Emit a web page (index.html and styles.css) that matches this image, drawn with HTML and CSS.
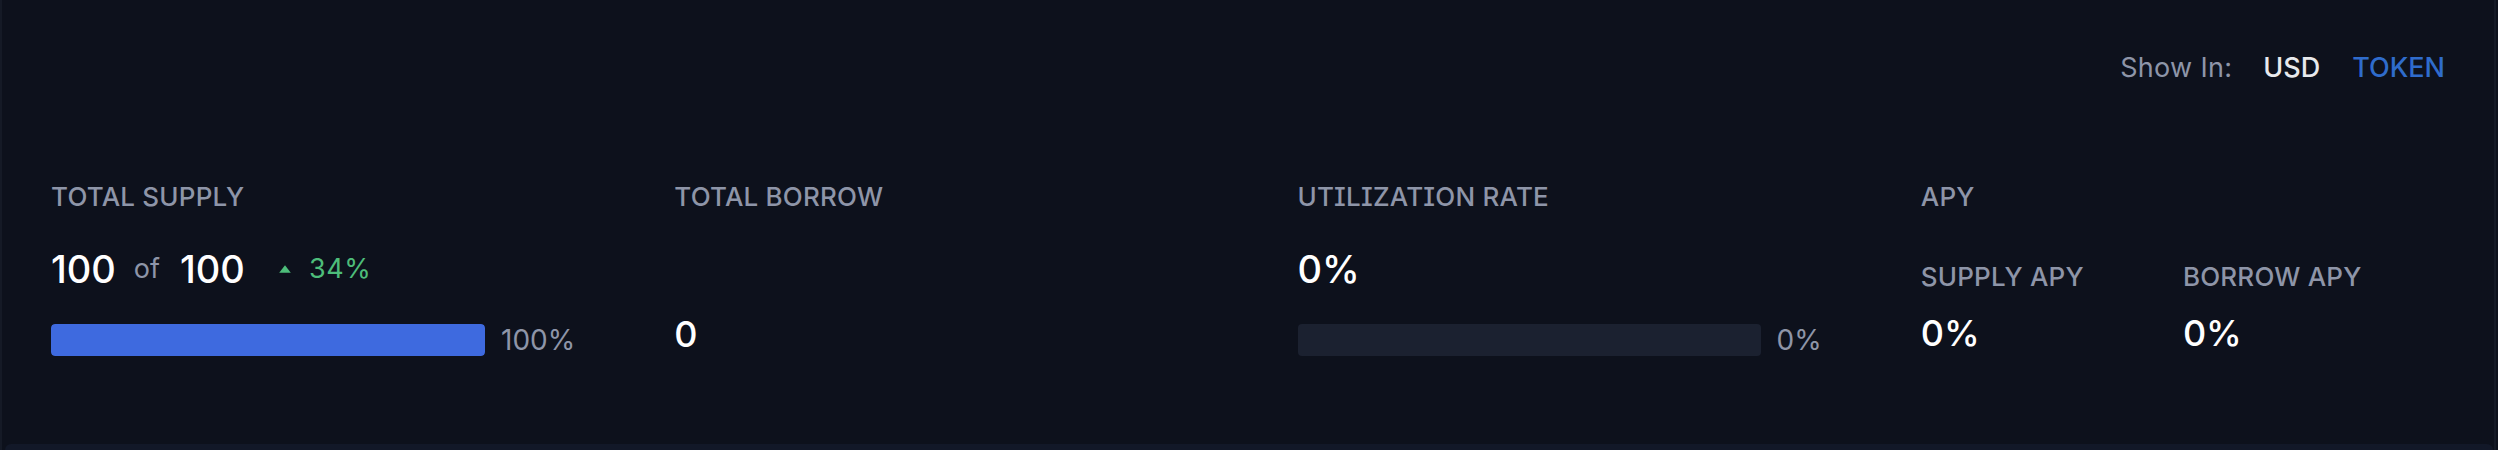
FILE: index.html
```html
<!DOCTYPE html>
<html lang="en">
<head>
<meta charset="utf-8">
<title>Market Overview</title>
<link rel="stylesheet" href="styles.css">
</head>
<body>
<div class="frame">
  <section class="card">
    <div class="toolbar">
      <span class="show-label">Show In:</span>
      <span class="opt opt-active">USD</span>
      <span class="opt opt-token">TOKEN</span>
    </div>
    <div class="stats">
      <div class="stat">
        <div class="label">TOTAL SUPPLY</div>
        <div class="value-row">
          <span class="value">100</span>
          <span class="of">of</span>
          <span class="value">100</span>
          <svg class="tri" width="12" height="8" viewBox="0 0 12 8"><path d="M6 0.3 L11.8 7.7 H0.2 Z" fill="#4dbd7a"/></svg>
          <span class="change">34%</span>
        </div>
        <div class="bar-row">
          <div class="bar"><div class="bar-fill" style="width:100%"></div></div>
          <span class="pct">100%</span>
        </div>
      </div>
      <div class="stat">
        <div class="label">TOTAL BORROW</div>
        <div class="value value-low">0</div>
      </div>
      <div class="stat">
        <div class="label">UTILIZATION RATE</div>
        <div class="value-row">
          <span class="value">0%</span>
        </div>
        <div class="bar-row">
          <div class="bar"><div class="bar-fill" style="width:0%"></div></div>
          <span class="pct">0%</span>
        </div>
      </div>
      <div class="stat">
        <div class="label">APY</div>
        <div class="apy">
          <div class="apy-item">
            <div class="label">SUPPLY APY</div>
            <div class="value value-apy">0%</div>
          </div>
          <div class="apy-item">
            <div class="label">BORROW APY</div>
            <div class="value value-apy">0%</div>
          </div>
        </div>
      </div>
    </div>
  </section>
  <div class="next-card"></div>
</div>
</body>
</html>
```
FILE: styles.css
```css
* { box-sizing: border-box; }
html, body {
  margin: 0;
  padding: 0;
  background: #0d111c;
  font-family: Inter, "Noto Sans", "Liberation Sans", sans-serif;
  overflow: hidden;
}
.frame {
  width: 2496px;
  height: 450px;
  border-left: 2px solid #151a26;
  border-right: 2px solid #151a26;
  display: flex;
  flex-direction: column;
}
.card {
  height: 444px;
  padding: 52px 46px 0 49px;
  background: #0d111c;
}
.next-card {
  flex: 1;
  margin: 0 1px 0 3px;
  background: #121828;
  border-radius: 8px 8px 0 0;
}
.toolbar {
  display: flex;
  justify-content: flex-end;
  align-items: center;
  height: 32px;
  font-size: 27px;
  line-height: 32px;
}
.show-label {
  color: #8e95a8;
  margin-right: 31px;
  letter-spacing: 0.3px;
}
.opt {
  font-weight: 500;
}
.opt-active {
  color: #e8e9ec;
  margin-right: 32px;
}
.opt-token {
  color: #2f6ccc;
  margin-right: 3px;
}
.stats {
  margin-top: 97px;
  margin-right: 3px;
  display: grid;
  grid-template-columns: repeat(4, 1fr);
  column-gap: 99px;
}
.stat {
  display: flex;
  flex-direction: column;
}
.label {
  font-size: 26px;
  line-height: 32px;
  font-weight: 500;
  color: #8e95a8;
  letter-spacing: 0.2px;
  white-space: nowrap;
  font-feature-settings: "cv08" 1;
}
.value-row {
  margin-top: 33px;
  height: 46px;
  display: flex;
  align-items: center;
}
.value {
  font-size: 38px;
  line-height: 46px;
  font-weight: 500;
  color: #ffffff;
}
.of {
  font-size: 27px;
  line-height: 32px;
  color: #8e95a8;
  margin: 0 20px 0 18px;
}
.tri {
  margin: 0 18px 0 34px;
  flex: none;
}
.change {
  font-size: 27px;
  line-height: 32px;
  color: #4dbd7a;
  letter-spacing: 0.6px;
}
.bar-row {
  margin-top: 32px;
  display: flex;
  align-items: center;
  gap: 16px;
}
.bar {
  flex: 1;
  height: 32px;
  border-radius: 4px;
  background: #1b2130;
  overflow: hidden;
}
.bar-fill {
  height: 100%;
  background: #3e6adf;
  border-radius: 4px;
}
.pct {
  font-size: 28px;
  line-height: 32px;
  color: #8e95a8;
  letter-spacing: 0;
}
.value-low {
  margin-top: 99px;
  font-size: 36px;
  line-height: 44px;
}
.apy {
  margin-top: 48px;
  display: grid;
  grid-template-columns: 1fr 1fr;
}
.value-apy {
  margin-top: 18px;
  font-size: 36px;
  line-height: 44px;
}
```
